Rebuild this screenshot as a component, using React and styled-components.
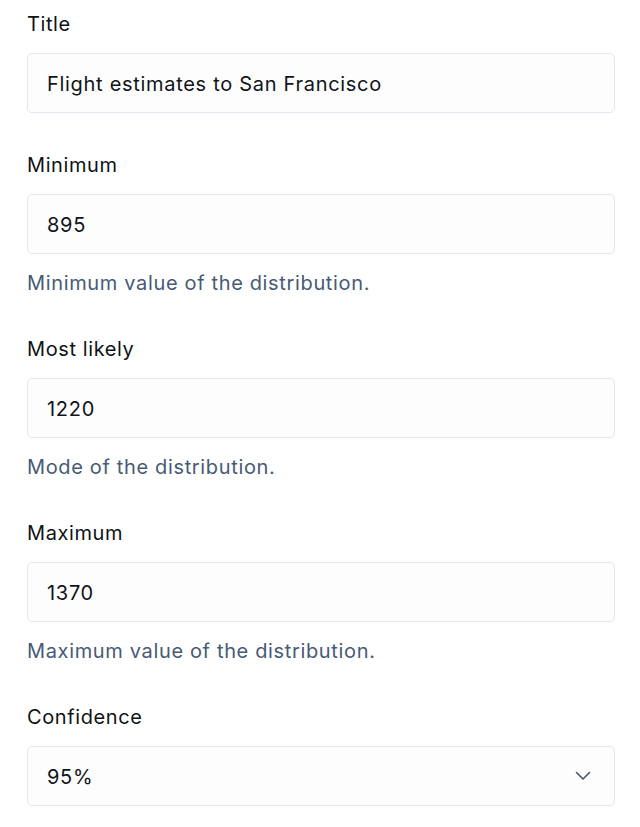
import styled, { createGlobalStyle } from 'styled-components';

const GlobalStyle = createGlobalStyle`
  body {
    margin: 0;
    background: #ffffff;
    font-family: Inter, "Noto Sans", sans-serif;
    color: #111418;
  }
`;

const Form = styled.form`
  display: flex;
  flex-direction: column;
  gap: 38px;
  padding: 10px 25px 0 27px;
`;

const Field = styled.div`
  display: flex;
  flex-direction: column;
`;

const Label = styled.label`
  font-size: 20px;
  line-height: 28px;
  font-weight: 400;
  letter-spacing: 0.6px;
  color: #0f1216;
  margin-bottom: 15px;
`;

const Input = styled.input`
  box-sizing: border-box;
  height: 60px;
  width: 100%;
  padding: 1px 19px 0;
  border: 1.5px solid #e2e8f0;
  border-radius: 5px;
  background: #fdfdfe;
  font-family: inherit;
  font-size: 20px;
  letter-spacing: 0.7px;
  color: #111418;
  outline: none;
`;

const Help = styled.p`
  margin: 16px 0 0;
  font-size: 20px;
  line-height: 27px;
  letter-spacing: 0.65px;
  color: #475a76;
`;

const SelectWrap = styled.div`
  position: relative;
`;

const Select = styled.select`
  box-sizing: border-box;
  appearance: none;
  height: 60px;
  width: 100%;
  padding: 1px 19px 0;
  border: 1.5px solid #e2e8f0;
  border-radius: 5px;
  background: #fdfdfe;
  font-family: inherit;
  font-size: 20px;
  letter-spacing: 0.7px;
  color: #111418;
  outline: none;
`;

const Chevron = styled.svg`
  position: absolute;
  right: 24px;
  top: 50%;
  transform: translateY(-50%);
  pointer-events: none;
`;

const fields = [
  { label: 'Title', value: 'Flight estimates to San Francisco' },
  { label: 'Minimum', value: '895', help: 'Minimum value of the distribution.' },
  { label: 'Most likely', value: '1220', help: 'Mode of the distribution.' },
  { label: 'Maximum', value: '1370', help: 'Maximum value of the distribution.' },
];

export default function App() {
  return (
    <>
      <GlobalStyle />
      <Form>
        {fields.map((f) => (
          <Field key={f.label}>
            <Label>{f.label}</Label>
            <Input defaultValue={f.value} />
            {f.help && <Help>{f.help}</Help>}
          </Field>
        ))}
        <Field>
          <Label>Confidence</Label>
          <SelectWrap>
            <Select defaultValue="95">
              <option value="80">80%</option>
              <option value="90">90%</option>
              <option value="95">95%</option>
              <option value="99">99%</option>
            </Select>
            <Chevron width="16" height="10" viewBox="0 0 16 10" fill="none">
              <path d="M1.5 1.5 L8 8 L14.5 1.5" stroke="#4b5563" strokeWidth="1.6" strokeLinecap="round" strokeLinejoin="round" />
            </Chevron>
          </SelectWrap>
        </Field>
      </Form>
    </>
  );
}
